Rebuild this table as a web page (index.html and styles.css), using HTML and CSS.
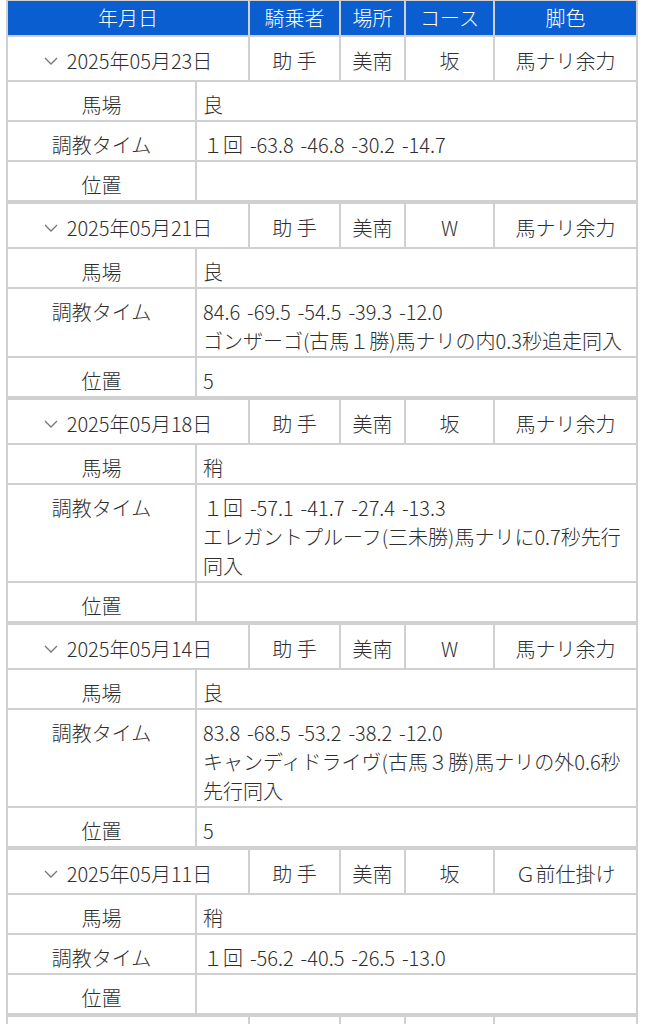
FILE: index.html
```html
<!DOCTYPE html>
<html lang="ja">
<head>
<meta charset="utf-8">
<title>調教</title>
<link rel="stylesheet" href="styles.css">
</head>
<body>
<div class="sheet">
  <div class="row cols5 head">
    <div class="cell">年月日</div>
    <div class="cell">騎乗者</div>
    <div class="cell">場所</div>
    <div class="cell">コース</div>
    <div class="cell">脚色</div>
  </div>

  <section class="group">
    <div class="row cols5 date">
      <div class="cell day"><svg class="chev" viewBox="0 0 14 8" width="14" height="8"><polyline points="1,1 7,7 13,1"/></svg>2025年05月23日</div>
      <div class="cell">助 手</div>
      <div class="cell">美南</div>
      <div class="cell">坂</div>
      <div class="cell">馬ナリ余力</div>
    </div>
    <div class="row cols2"><div class="cell label">馬場</div><div class="cell value">良</div></div>
    <div class="row cols2"><div class="cell label">調教タイム</div><div class="cell value">１回 -63.8 -46.8 -30.2 -14.7</div></div>
    <div class="row cols2"><div class="cell label">位置</div><div class="cell value"></div></div>
  </section>

  <section class="group">
    <div class="row cols5 date">
      <div class="cell day"><svg class="chev" viewBox="0 0 14 8" width="14" height="8"><polyline points="1,1 7,7 13,1"/></svg>2025年05月21日</div>
      <div class="cell">助 手</div>
      <div class="cell">美南</div>
      <div class="cell">W</div>
      <div class="cell">馬ナリ余力</div>
    </div>
    <div class="row cols2"><div class="cell label">馬場</div><div class="cell value">良</div></div>
    <div class="row cols2"><div class="cell label">調教タイム</div><div class="cell value">84.6 -69.5 -54.5 -39.3 -12.0<br>ゴンザーゴ(古馬１勝)馬ナリの内0.3秒追走同入</div></div>
    <div class="row cols2"><div class="cell label">位置</div><div class="cell value">5</div></div>
  </section>

  <section class="group">
    <div class="row cols5 date">
      <div class="cell day"><svg class="chev" viewBox="0 0 14 8" width="14" height="8"><polyline points="1,1 7,7 13,1"/></svg>2025年05月18日</div>
      <div class="cell">助 手</div>
      <div class="cell">美南</div>
      <div class="cell">坂</div>
      <div class="cell">馬ナリ余力</div>
    </div>
    <div class="row cols2"><div class="cell label">馬場</div><div class="cell value">稍</div></div>
    <div class="row cols2"><div class="cell label">調教タイム</div><div class="cell value">１回 -57.1 -41.7 -27.4 -13.3<br>エレガントプルーフ(三未勝)馬ナリに0.7秒先行同入</div></div>
    <div class="row cols2"><div class="cell label">位置</div><div class="cell value"></div></div>
  </section>

  <section class="group">
    <div class="row cols5 date">
      <div class="cell day"><svg class="chev" viewBox="0 0 14 8" width="14" height="8"><polyline points="1,1 7,7 13,1"/></svg>2025年05月14日</div>
      <div class="cell">助 手</div>
      <div class="cell">美南</div>
      <div class="cell">W</div>
      <div class="cell">馬ナリ余力</div>
    </div>
    <div class="row cols2"><div class="cell label">馬場</div><div class="cell value">良</div></div>
    <div class="row cols2"><div class="cell label">調教タイム</div><div class="cell value">83.8 -68.5 -53.2 -38.2 -12.0<br>キャンディドライヴ(古馬３勝)馬ナリの外0.6秒先行同入</div></div>
    <div class="row cols2"><div class="cell label">位置</div><div class="cell value">5</div></div>
  </section>

  <section class="group">
    <div class="row cols5 date">
      <div class="cell day"><svg class="chev" viewBox="0 0 14 8" width="14" height="8"><polyline points="1,1 7,7 13,1"/></svg>2025年05月11日</div>
      <div class="cell">助 手</div>
      <div class="cell">美南</div>
      <div class="cell">坂</div>
      <div class="cell">Ｇ前仕掛け</div>
    </div>
    <div class="row cols2"><div class="cell label">馬場</div><div class="cell value">稍</div></div>
    <div class="row cols2"><div class="cell label">調教タイム</div><div class="cell value">１回 -56.2 -40.5 -26.5 -13.0</div></div>
    <div class="row cols2"><div class="cell label">位置</div><div class="cell value"></div></div>
  </section>

  <section class="group">
    <div class="row cols5 date">
      <div class="cell day"></div>
      <div class="cell"></div>
      <div class="cell"></div>
      <div class="cell"></div>
      <div class="cell"></div>
    </div>
  </section>
</div>
</body>
</html>
```

FILE: styles.css
```css
html, body {
  margin: 0;
  padding: 0;
  background: #ffffff;
}

body {
  font-family: "Noto Sans CJK JP", "Noto Sans", sans-serif;
  font-size: 20px;
  font-weight: 300;
  color: #2e2e2e;
}

.sheet {
  margin: 0 8px 0 6px;
  padding: 1px 2px 0;
  background: #d0d0d0;
  display: flex;
  flex-direction: column;
  gap: 2px;
}

.group {
  display: flex;
  flex-direction: column;
  gap: 2px;
}

.group + .group {
  margin-top: 2px;
}

.row {
  display: grid;
  gap: 2px;
}

.cols5 {
  grid-template-columns: 240px 89px 63px 87px 1fr;
}

.cols2 {
  grid-template-columns: 187px 1fr;
}

.cell {
  background: #ffffff;
  line-height: 29px;
}

.head .cell {
  background: #0a5ecf;
  color: #ffffff;
  height: 34px;
  line-height: 34px;
  text-align: center;
}

.date .cell {
  height: 43px;
  box-sizing: border-box;
  padding: 9px 0 5px;
  text-align: center;
  white-space: nowrap;
}

.day {
  display: flex;
  justify-content: center;
  align-items: flex-start;
}

.chev {
  fill: none;
  stroke: #777777;
  stroke-width: 1.3;
  margin: 11px 9px 0 0;
}

.label {
  text-align: center;
  padding: 8px 0 1px;
}

.value {
  padding: 8px 4px 1px 6px;
  min-height: 29px;
  word-spacing: 2.5px;
}
```
